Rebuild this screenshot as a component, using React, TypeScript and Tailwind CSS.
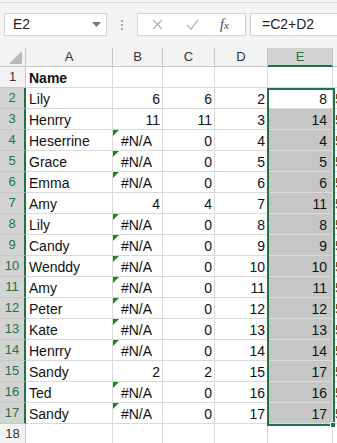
import { Fragment } from 'react'

type Val = string | number
const data: [string, Val, number, number, number][] = [
  ['Lily', 6, 6, 2, 8],
  ['Henrry', 11, 11, 3, 14],
  ['Heserrine', '#N/A', 0, 4, 4],
  ['Grace', '#N/A', 0, 5, 5],
  ['Emma', '#N/A', 0, 6, 6],
  ['Amy', 4, 4, 7, 11],
  ['Lily', '#N/A', 0, 8, 8],
  ['Candy', '#N/A', 0, 9, 9],
  ['Wenddy', '#N/A', 0, 10, 10],
  ['Amy', '#N/A', 0, 11, 11],
  ['Peter', '#N/A', 0, 12, 12],
  ['Kate', '#N/A', 0, 13, 13],
  ['Henrry', '#N/A', 0, 14, 14],
  ['Sandy', 2, 2, 15, 17],
  ['Ted', '#N/A', 0, 16, 16],
  ['Sandy', '#N/A', 0, 17, 17],
]

const cell = 'h-[21px] border-r border-b border-[#dadada] flex items-end leading-[17px] overflow-hidden whitespace-nowrap'
const hdr = 'h-[21px] border-r border-b border-[#c8c8c8] flex items-center justify-center text-[13px]'

function FormulaBar() {
  return (
    <div className="h-[48px] bg-[#f3f3f3] pt-[2px]">
      <div className="h-full border-t border-[#dcdcdc] flex items-start pt-[10px] pl-[4px]">
        <div className="w-[103px] h-[23px] bg-white border border-[#d4d4d4] flex items-center justify-between pl-[8px] pr-[5px]">
          <span className="text-[14px] text-[#222]">E2</span>
          <svg width="9" height="5" viewBox="0 0 9 5"><path d="M0 0h9L4.5 5z" fill="#777" /></svg>
        </div>
        <div className="w-[30px] h-[23px] flex flex-col items-center justify-center gap-[2px]">
          <span className="w-[2px] h-[2px] bg-[#a8a8a8]" />
          <span className="w-[2px] h-[2px] bg-[#a8a8a8]" />
          <span className="w-[2px] h-[2px] bg-[#a8a8a8]" />
        </div>
        <div className="w-[109px] h-[23px] bg-white border border-[#d4d4d4] flex items-center">
          <svg className="ml-[14px]" width="11" height="11" viewBox="0 0 11 11"><path d="M1 1l9 9M10 1l-9 9" stroke="#b4b4b4" strokeWidth="1.3" /></svg>
          <svg className="ml-[23px]" width="13" height="11" viewBox="0 0 13 11"><path d="M1 6l4 4 7-9" stroke="#b4b4b4" strokeWidth="1.4" fill="none" /></svg>
          <span className="ml-[21px] text-[14px] italic text-[#444] font-['Liberation_Serif',serif]">f<span className="text-[11px]">x</span></span>
        </div>
        <div className="flex-1 ml-[4px] h-[23px] bg-white border border-[#d4d4d4] border-r-0 flex items-center pl-[11px]">
          <span className="text-[14px] text-[#222]">=C2+D2</span>
        </div>
      </div>
    </div>
  )
}

export default function App() {
  return (
    <div className="w-[337px] h-[443px] overflow-hidden bg-white font-['Liberation_Sans',Arial,sans-serif] text-[#111] relative">
      <FormulaBar />
      <div className="grid grid-cols-[26px_87px_50px_52px_53px_65px_1fr] text-[14px] bg-white">
        <div className="h-[19px] bg-[#f3f3f3] border-r border-b border-[#c8c8c8] flex items-end justify-end pr-[3px] pb-[2px]">
          <svg width="13" height="13" viewBox="0 0 13 13"><path d="M13 0v13H0z" fill="#b9b9b9" /></svg>
        </div>
        {['A', 'B', 'C', 'D'].map((c) => (
          <div key={c} className="h-[19px] bg-[#f3f3f3] border-r border-b border-[#c8c8c8] flex items-center justify-center text-[13px] text-[#333]">{c}</div>
        ))}
        <div className="h-[19px] bg-[#d3d3d3] border-r border-[#c8c8c8] border-b-2 border-b-[#217346] flex items-center justify-center text-[13px] text-[#217346]">E</div>
        <div className="h-[19px] bg-[#f3f3f3] border-b border-[#c8c8c8]" />

        <div className={`${hdr} bg-[#f3f3f3] text-[#333]`}>1</div>
        <div className={`${cell} pl-[3px] font-bold`}>Name</div>
        <div className={cell} />
        <div className={cell} />
        <div className={cell} />
        <div className={cell} />
        <div className={`${cell} border-r-0`} />

        {data.map(([name, b, c, d, e], i) => {
          const err = typeof b === 'string'
          return (
            <Fragment key={i}>
              <div className={`${hdr} bg-[#d3d3d3] text-[#217346] border-r-2 border-r-[#217346]`}>{i + 2}</div>
              <div className={`${cell} pl-[3px]`}>{name}</div>
              <div className={`${cell} relative ${err ? 'justify-center pr-[2px]' : 'justify-end pr-[2px]'}`}>
                {err && (
                  <svg className="absolute left-0 top-0" width="6" height="6" viewBox="0 0 6 6"><path d="M0 0h6L0 6z" fill="#1d8a1d" /></svg>
                )}
                {b}
              </div>
              <div className={`${cell} justify-end pr-[2px]`}>{c}</div>
              <div className={`${cell} justify-end pr-[2px]`}>{d}</div>
              <div className={`${cell} justify-end pr-[5px] ${i === 0 ? '' : 'bg-[#c6c6c6]'}`}>{e}</div>
              <div className={`${cell} border-r-0 pl-[2px] text-[#5a3a10]`}>5</div>
            </Fragment>
          )
        })}

        <div className={`${hdr} bg-[#f3f3f3] text-[#333]`}>18</div>
        <div className={cell} />
        <div className={cell} />
        <div className={cell} />
        <div className={cell} />
        <div className={cell} />
        <div className={`${cell} border-r-0`} />
      </div>

      <div className="absolute left-[267px] top-[88px] w-[68px] h-[338px] border-2 border-[#217346] pointer-events-none" />
      <div className="absolute left-[330px] top-[422px] w-[6px] h-[6px] bg-[#217346] border border-white" />
    </div>
  )
}
